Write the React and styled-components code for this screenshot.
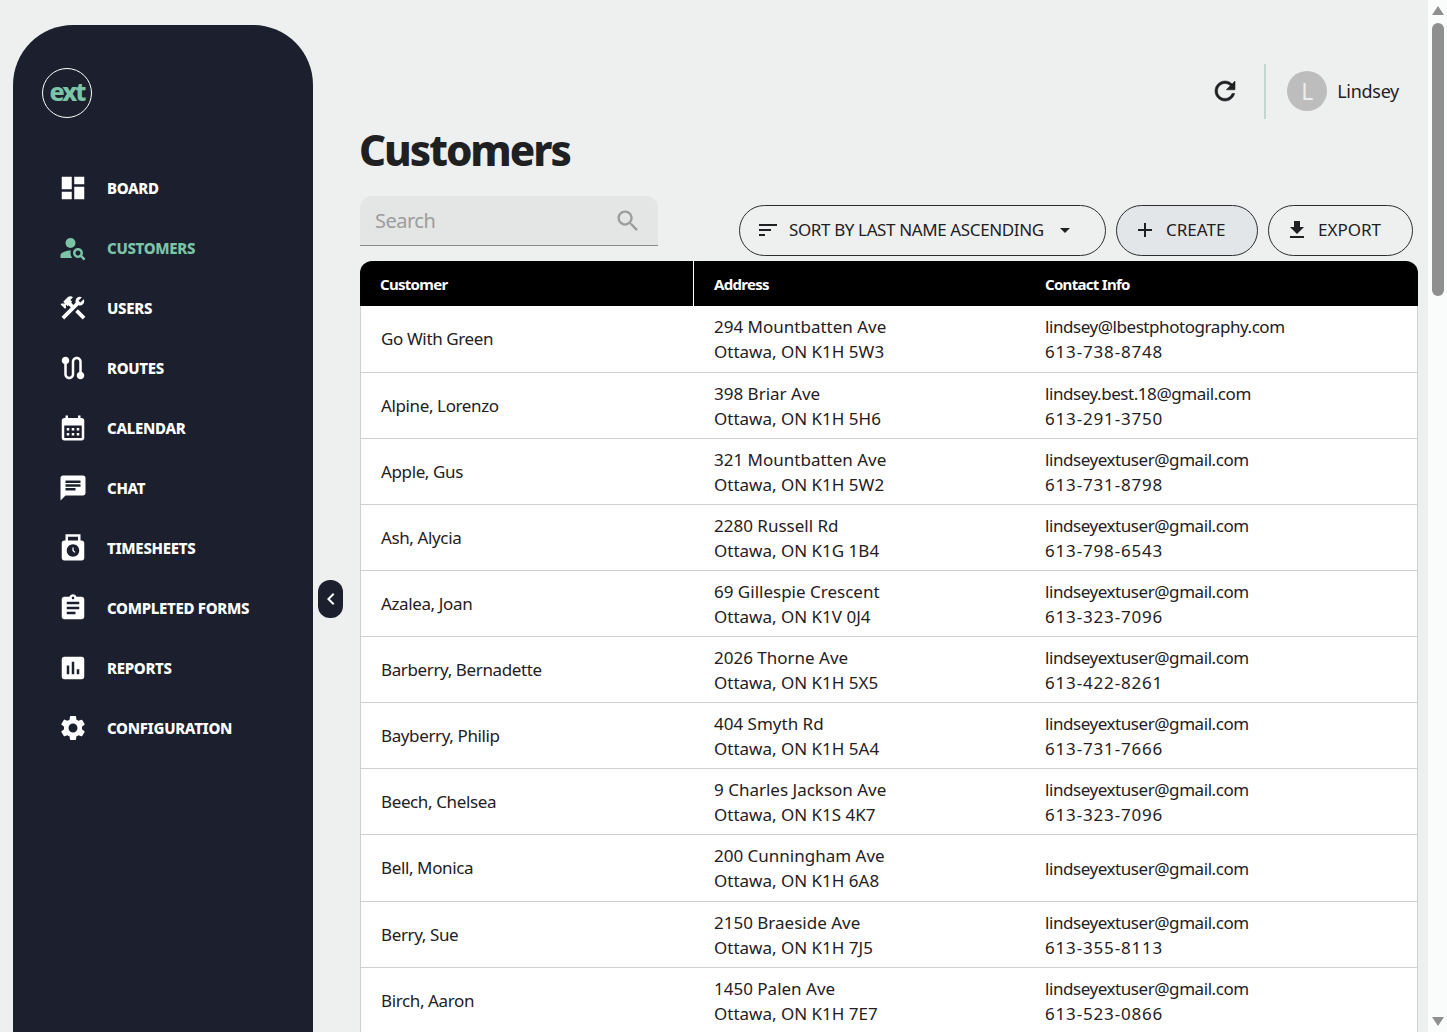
import React from "react";
import styled, { createGlobalStyle } from "styled-components";

const Global = createGlobalStyle`
  html, body { margin: 0; padding: 0; height: 100%; overflow: hidden; background: #eef0f0; }
  #root { height: 100%; }
  * { box-sizing: border-box; }
`;

const Page = styled.div`
  display: flex;
  height: 100vh;
  overflow: hidden;
  background: #eef0f0;
  font-family: "Noto Sans", "Liberation Sans", sans-serif;
  color: #1f2022;
`;

const Shell = styled.div`
  flex: 1;
  min-width: 0;
  display: flex;
  align-items: stretch;
  padding: 25px 10px 0 13px;
`;

const Rail = styled.div`
  flex: 0 0 19px;
  display: flex;
  flex-direction: column;
  justify-content: space-between;
  padding: 0 3px 0 4px;
  background: #fafbfb;
  color: #8f8f8f;
`;

const RailTop = styled.div`
  display: flex;
  flex-direction: column;
`;

const Arrow = styled.svg`
  display: block;
  width: 12px;
  height: 17px;
`;

const Thumb = styled.div`
  width: 12px;
  height: 273px;
  margin-top: 6px;
  border-radius: 6px;
  background: #8f8f8f;
`;

const Sidebar = styled.aside`
  position: relative;
  flex: 0 0 300px;
  background: #1c202e;
  border-radius: 60px 60px 0 0;
  padding: 43px 0 0 29px;
`;

const Logo = styled.div`
  width: 50px;
  height: 50px;
  border-radius: 50%;
  border: 1.5px solid #fff;
  display: flex;
  align-items: center;
  justify-content: center;
  color: #7cc4a8;
  font-weight: 800;
  font-size: 25px;
  letter-spacing: -2px;
  line-height: 1;
  padding-bottom: 3px;
`;

const Nav = styled.nav`
  display: flex;
  flex-direction: column;
  gap: 30px;
  margin: 55px 0 0 16px;
`;

const NavItem = styled.a`
  display: flex;
  align-items: center;
  gap: 19px;
  height: 30px;
  color: ${(p) => (p.$active ? "#7cc4a8" : "#fff")};
  font-size: 15px;
  font-weight: 800;
  letter-spacing: -0.3px;
  text-transform: uppercase;
`;

const Collapse = styled.button`
  position: absolute;
  top: 555px;
  right: -30px;
  width: 25px;
  height: 38px;
  padding: 0;
  border: 0;
  border-radius: 12px;
  background: #1c202e;
  color: #fff;
  display: flex;
  align-items: center;
  justify-content: center;
`;

const Main = styled.main`
  flex: 1;
  min-width: 0;
  padding-left: 47px;
`;

const TopBar = styled.header`
  display: flex;
  justify-content: flex-end;
  align-items: center;
  height: 55px;
  margin-top: 39px;
  padding: 0 19px 2px 0;
  color: #1f2022;
`;

const RefreshBtn = styled.span`
  display: flex;
  margin-right: 24px;
  stroke: currentColor;
  stroke-width: 0.45px;
`;

const Divider = styled.span`
  width: 2px;
  align-self: stretch;
  margin-bottom: -2px;
  background: #c4d6d0;
  margin-right: 21.5px;
`;

const Avatar = styled.span`
  width: 40px;
  height: 40px;
  border-radius: 50%;
  background: #bdbdbd;
  color: #eeeeee;
  font-size: 23px;
  display: flex;
  align-items: center;
  justify-content: center;
  margin-right: 10px;
`;

const UserName = styled.span`
  font-size: 18px;
  letter-spacing: -0.3px;
`;

const Title = styled.h1`
  margin: 6px 0 0 -1px;
  font-size: 42px;
  line-height: 50px;
  font-weight: 800;
  letter-spacing: -2px;
  color: #1f2022;
`;

const Toolbar = styled.div`
  display: flex;
  justify-content: space-between;
  align-items: flex-start;
  margin-top: 21px;
  padding-right: 5px;
`;

const SearchBox = styled.div`
  width: 298px;
  height: 50px;
  background: #e4e5e5;
  border-radius: 12px 12px 0 0;
  border-bottom: 1px solid #8a8a8a;
  display: flex;
  align-items: center;
  justify-content: space-between;
  padding: 0 16px 0 15px;
  color: #9c9c9c;
  font-size: 20px;
  letter-spacing: -0.5px;
`;

const Actions = styled.div`
  display: flex;
  gap: 10px;
  margin-top: 9px;
`;

const Pill = styled.button`
  height: 51px;
  width: ${(p) => p.$w}px;
  display: flex;
  align-items: center;
  padding: 0 0 2px ${(p) => p.$pl}px;
  gap: 9px;
  border: 1px solid #2c2d30;
  border-radius: 26px;
  background: ${(p) => (p.$filled ? "#e3e6e8" : "transparent")};
  color: #1f2022;
  font-family: inherit;
  font-size: 17px;
  letter-spacing: ${(p) => p.$ls || 0}px;
  text-transform: uppercase;
  white-space: nowrap;
`;

const Table = styled.table`
  width: 100%;
  margin-top: 5px;
  border-collapse: separate;
  border-spacing: 0;
  table-layout: fixed;
  font-size: 17px;
  line-height: 25px;
`;

const Th = styled.th`
  height: 45px;
  padding: 1px 20px 0;
  background: #000;
  color: #fff;
  text-align: left;
  font-size: 15px;
  font-weight: 700;
  letter-spacing: -0.7px;
  width: ${(p) => p.$w || "auto"};
  border-right: ${(p) => (p.$sep ? "1px solid #fff" : "0")};
  &:first-child { border-top-left-radius: 12px; }
  &:last-child { border-top-right-radius: 12px; }
`;

const Row = styled.tr`
  height: 66.12px;
  background: #fff;
  &:first-child { height: 66.67px; }
`;

const Td = styled.td`
  padding: ${(p) => p.$pt ?? 1}px 20px 0;
  border-bottom: 1px solid #cfcfcf;
  letter-spacing: ${(p) => p.$ls || 0}px;
  &:first-child { border-left: 1px solid #cfcfcf; }
  &:last-child { border-right: 1px solid #cfcfcf; }
`;

const Line = styled.div`
  white-space: nowrap;
  letter-spacing: ${(p) => p.$ls || 0}px;
`;

const Svg = ({ d, size = 30, children }) => (
  <svg width={size} height={size} viewBox="0 0 24 24" fill="currentColor" style={{ flex: "none" }}>
    {d && <path d={d} />}
    {children}
  </svg>
);

const P = {
  board: "M3 13h8V3H3v10zm0 8h8v-6H3v6zm10 0h8V11h-8v10zm0-18v6h8V3h-8z",
  users: "m13.7826 15.1719 2.1213-2.1213 5.9963 5.9962-2.1213 2.1213zM17.5 10c1.93 0 3.5-1.57 3.5-3.5 0-.58-.16-1.12-.41-1.6l-2.7 2.7-1.49-1.49 2.7-2.7c-.48-.25-1.02-.41-1.6-.41C15.57 3 14 4.57 14 6.5c0 .41.08.8.21 1.16l-1.85 1.85-1.78-1.78.71-.71-1.41-1.41L12 3.49c-1.17-1.17-3.07-1.17-4.24 0L4.22 7.03l1.41 1.41H2.81l-.71.71 3.54 3.54.71-.71V9.15l1.41 1.41.71-.71 1.78 1.78-7.41 7.41 2.12 2.12L16.34 9.79c.36.13.75.21 1.16.21z",
  routes: "M19 15.18V7c0-2.21-1.79-4-4-4s-4 1.79-4 4v10c0 1.1-.9 2-2 2s-2-.9-2-2V8.82C8.16 8.4 9 7.3 9 6c0-1.66-1.34-3-3-3S3 4.34 3 6c0 1.3.84 2.4 2 2.82V17c0 2.21 1.79 4 4 4s4-1.79 4-4V7c0-1.1.9-2 2-2s2 .9 2 2v8.18c-1.16.41-2 1.51-2 2.82 0 1.66 1.34 3 3 3s3-1.34 3-3c0-1.3-.84-2.4-2-2.82z",
  calendar: "M19 4h-1V2h-2v2H8V2H6v2H5c-1.1 0-2 .9-2 2v14c0 1.1.9 2 2 2h14c1.1 0 2-.9 2-2V6c0-1.1-.9-2-2-2zm0 16H5V10h14v10zM9 14H7v-2h2v2zm4 0h-2v-2h2v2zm4 0h-2v-2h2v2zm-8 4H7v-2h2v2zm4 0h-2v-2h2v2zm4 0h-2v-2h2v2z",
  chat: "M20 2H4c-1.1 0-1.99.9-1.99 2L2 22l4-4h14c1.1 0 2-.9 2-2V4c0-1.1-.9-2-2-2zM6 9h12v2H6V9zm8 5H6v-2h8v2zm4-6H6V6h12v2z",
  forms: "M19 3h-4.18C14.4 1.84 13.3 1 12 1c-1.3 0-2.4.84-2.82 2H5c-1.1 0-2 .9-2 2v14c0 1.1.9 2 2 2h14c1.1 0 2-.9 2-2V5c0-1.1-.9-2-2-2zm-7 0c.55 0 1 .45 1 1s-.45 1-1 1-1-.45-1-1 .45-1 1-1zm2 14H7v-2h7v2zm3-4H7v-2h10v2zm0-4H7V7h10v2z",
  reports: "M19 3H5c-1.1 0-2 .9-2 2v14c0 1.1.9 2 2 2h14c1.1 0 2-.9 2-2V5c0-1.1-.9-2-2-2zM9 17H7v-7h2v7zm4 0h-2V7h2v10zm4 0h-2v-4h2v4z",
  settings: "M19.14 12.94c.04-.3.06-.61.06-.94 0-.32-.02-.64-.07-.94l2.03-1.58c.18-.14.23-.41.12-.61l-1.92-3.32c-.12-.22-.37-.29-.59-.22l-2.39.96c-.5-.38-1.03-.7-1.62-.94l-.36-2.54c-.04-.24-.24-.41-.48-.41h-3.84c-.24 0-.43.17-.47.41l-.36 2.54c-.59.24-1.13.57-1.62.94l-2.39-.96c-.22-.08-.47 0-.59.22L2.74 8.87c-.12.21-.08.47.12.61l2.03 1.58c-.05.3-.09.63-.09.94s.02.64.07.94l-2.03 1.58c-.18.14-.23.41-.12.61l1.92 3.32c.12.22.37.29.59.22l2.39-.96c.5.38 1.03.7 1.62.94l.36 2.54c.05.24.24.41.48.41h3.84c.24 0 .44-.17.47-.41l.36-2.54c.59-.24 1.13-.56 1.62-.94l2.39.96c.22.08.47 0 .59-.22l1.92-3.32c.12-.22.07-.47-.12-.61l-2.01-1.58zM12 15.6c-1.98 0-3.6-1.62-3.6-3.6s1.62-3.6 3.6-3.6 3.6 1.62 3.6 3.6-1.62 3.6-3.6 3.6z",
  refresh: "M17.65 6.35C16.2 4.9 14.21 4 12 4c-4.42 0-7.99 3.58-7.99 8s3.57 8 7.99 8c3.73 0 6.84-2.55 7.73-6h-2.08c-.82 2.33-3.04 4-5.65 4-3.31 0-6-2.69-6-6s2.69-6 6-6c1.66 0 3.14.69 4.22 1.78L13 11h7V4l-2.35 2.35z",
  search: "M15.5 14h-.79l-.28-.27C15.41 12.59 16 11.11 16 9.5 16 5.91 13.09 3 9.5 3S3 5.91 3 9.5 5.91 16 9.5 16c1.61 0 3.09-.59 4.23-1.57l.27.28v.79l5 4.99L20.49 19l-4.99-5zm-6 0C7.01 14 5 11.99 5 9.5S7.01 5 9.5 5 14 7.01 14 9.5 11.99 14 9.5 14z",
  sort: "M3 18h6v-2H3v2zM3 6v2h18V6H3zm0 7h12v-2H3v2z",
  add: "M19 13h-6v6h-2v-6H5v-2h6V5h2v6h6v2z",
  download: "M19 9h-4V3H9v6H5l7 7 7-7zM5 18v2h14v-2H5z",
  drop: "M7 10l5 5 5-5z",
  chevron: "M15.41 7.41 14 6l-6 6 6 6 1.41-1.41L10.83 12z",
};

const CustomersIcon = () => (
  <Svg>
    <circle cx="10" cy="8" r="4" />
    <path d="M10.35 14.01C7.62 13.91 2 15.27 2 18v2h9.54c-2.47-2.76-1.23-5.89-1.19-5.99zM19.43 18.02c.36-.59.57-1.28.57-2.02 0-2.21-1.79-4-4-4s-4 1.79-4 4 1.79 4 4 4c.74 0 1.43-.22 2.02-.57L20.59 22 22 20.59l-2.57-2.57zM16 18c-1.1 0-2-.9-2-2s.9-2 2-2 2 .9 2 2-.9 2-2 2z" />
  </Svg>
);

const ClockIcon = () => (
  <Svg>
    <path d="M19 6h-1V1H6v5H5c-1.1 0-2 .9-2 2v12c0 1.1.9 2 2 2h14c1.1 0 2-.9 2-2V8c0-1.1-.9-2-2-2zM8 3h8v3H8V3zm4 16c-2.76 0-5-2.24-5-5s2.24-5 5-5 5 2.24 5 5-2.24 5-5 5z" />
    <path d="M12.5 11.5h-1v2.71l1.64 1.64.71-.71-1.35-1.35z" />
  </Svg>
);

const items = [
  ["Board", <Svg d={P.board} />],
  ["Customers", <CustomersIcon />, true],
  ["Users", <Svg d={P.users} />],
  ["Routes", <Svg d={P.routes} />],
  ["Calendar", <Svg d={P.calendar} />],
  ["Chat", <Svg d={P.chat} />],
  ["Timesheets", <ClockIcon />],
  ["Completed Forms", <Svg d={P.forms} />],
  ["Reports", <Svg d={P.reports} />],
  ["Configuration", <Svg d={P.settings} />],
];

const customers = [
  ["Go With Green", "294 Mountbatten Ave", "Ottawa, ON K1H 5W3", "lindsey@lbestphotography.com", "613-738-8748"],
  ["Alpine, Lorenzo", "398 Briar Ave", "Ottawa, ON K1H 5H6", "lindsey.best.18@gmail.com", "613-291-3750"],
  ["Apple, Gus", "321 Mountbatten Ave", "Ottawa, ON K1H 5W2", "lindseyextuser@gmail.com", "613-731-8798"],
  ["Ash, Alycia", "2280 Russell Rd", "Ottawa, ON K1G 1B4", "lindseyextuser@gmail.com", "613-798-6543"],
  ["Azalea, Joan", "69 Gillespie Crescent", "Ottawa, ON K1V 0J4", "lindseyextuser@gmail.com", "613-323-7096"],
  ["Barberry, Bernadette", "2026 Thorne Ave", "Ottawa, ON K1H 5X5", "lindseyextuser@gmail.com", "613-422-8261"],
  ["Bayberry, Philip", "404 Smyth Rd", "Ottawa, ON K1H 5A4", "lindseyextuser@gmail.com", "613-731-7666"],
  ["Beech, Chelsea", "9 Charles Jackson Ave", "Ottawa, ON K1S 4K7", "lindseyextuser@gmail.com", "613-323-7096"],
  ["Bell, Monica", "200 Cunningham Ave", "Ottawa, ON K1H 6A8", "lindseyextuser@gmail.com", ""],
  ["Berry, Sue", "2150 Braeside Ave", "Ottawa, ON K1H 7J5", "lindseyextuser@gmail.com", "613-355-8113"],
  ["Birch, Aaron", "1450 Palen Ave", "Ottawa, ON K1H 7E7", "lindseyextuser@gmail.com", "613-523-0866"],
];

export default function App() {
  return (
    <Page>
      <Global />
      <Shell>
        <Sidebar>
          <Logo>ext</Logo>
          <Nav>
            {items.map(([label, icon, active]) => (
              <NavItem key={label} $active={active}>
                {icon}
                <span>{label}</span>
              </NavItem>
            ))}
          </Nav>
          <Collapse aria-label="Collapse">
            <Svg d={P.chevron} size={24} />
          </Collapse>
        </Sidebar>
        <Main>
          <TopBar>
            <RefreshBtn>
              <Svg d={P.refresh} />
            </RefreshBtn>
            <Divider />
            <Avatar>L</Avatar>
            <UserName>Lindsey</UserName>
          </TopBar>
          <Title>Customers</Title>
          <Toolbar>
            <SearchBox>
              <span>Search</span>
              <Svg d={P.search} size={28} />
            </SearchBox>
            <Actions>
              <Pill $w={367} $pl={16} $ls={-0.38}>
                <Svg d={P.sort} size={24} />
                <span>Sort by last name ascending</span>
                <Svg d={P.drop} size={24} />
              </Pill>
              <Pill $w={142} $pl={16} $filled>
                <Svg d={P.add} size={24} />
                <span>Create</span>
              </Pill>
              <Pill $w={145} $pl={16}>
                <Svg d={P.download} size={24} />
                <span>Export</span>
              </Pill>
            </Actions>
          </Toolbar>
          <Table>
            <thead>
              <tr>
                <Th $w="334px" $sep>Customer</Th>
                <Th $w="331px">Address</Th>
                <Th>Contact Info</Th>
              </tr>
            </thead>
            <tbody>
              {customers.map((c) => (
                <Row key={c[0]}>
                  <Td $ls={-0.38} $pt={0}>{c[0]}</Td>
                  <Td $ls={-0.1}>
                    <Line>{c[1]}</Line>
                    <Line>{c[2]}</Line>
                  </Td>
                  <Td>
                    <Line $ls={-0.44}>{c[3]}</Line>
                    {c[4] && <Line $ls={0.83}>{c[4]}</Line>}
                  </Td>
                </Row>
              ))}
            </tbody>
          </Table>
        </Main>
      </Shell>
      <Rail>
        <RailTop>
          <Arrow viewBox="0 0 12 17" fill="currentColor"><path d="M6 6l6 9H0z" /></Arrow>
          <Thumb />
        </RailTop>
        <Arrow viewBox="0 0 12 17" fill="currentColor"><path d="M6 11L0 2h12z" /></Arrow>
      </Rail>
    </Page>
  );
}
